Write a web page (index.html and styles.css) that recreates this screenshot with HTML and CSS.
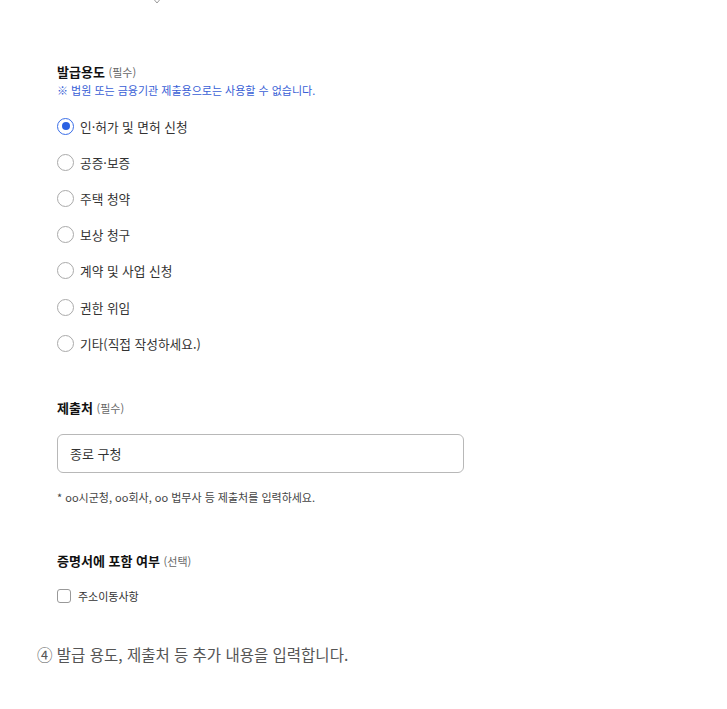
FILE: index.html
```html
<!DOCTYPE html>
<html lang="ko">
<head>
<meta charset="utf-8">
<link rel="stylesheet" href="styles.css">
</head>
<body>
<div class="page">
  <svg class="chev" width="14" height="8" viewBox="0 0 14 8"><polyline points="2,-3 7,3 12,-3" fill="none" stroke="#9a9a9a" stroke-width="1"/></svg>
  <div class="form">
    <div class="label">발급용도 <span class="sub">(필수)</span></div>
    <div class="note">※ 법원 또는 금융기관 제출용으로는 사용할 수 없습니다.</div>
    <div class="radios">
      <div class="radio-row"><span class="radio checked"></span><span>인·허가 및 면허 신청</span></div>
      <div class="radio-row"><span class="radio"></span><span>공증·보증</span></div>
      <div class="radio-row"><span class="radio"></span><span>주택 청약</span></div>
      <div class="radio-row"><span class="radio"></span><span>보상 청구</span></div>
      <div class="radio-row"><span class="radio"></span><span>계약 및 사업 신청</span></div>
      <div class="radio-row"><span class="radio"></span><span>권한 위임</span></div>
      <div class="radio-row"><span class="radio"></span><span>기타(직접 작성하세요.)</span></div>
    </div>
    <div class="label label-2">제출처 <span class="sub">(필수)</span></div>
    <div class="input">종로 구청</div>
    <div class="hint">* oo시군청, oo회사, oo 법무사 등 제출처를 입력하세요.</div>
    <div class="label label-3">증명서에 포함 여부 <span class="sub">(선택)</span></div>
    <div class="check-row"><span class="checkbox"></span><span>주소이동사항</span></div>
  </div>
  <p class="caption">④ 발급 용도, 제출처 등 추가 내용을 입력합니다.</p>
</div>
</body>
</html>
```
FILE: styles.css
```css
html, body {
  margin: 0;
  padding: 0;
  background: #fff;
}
body {
  font-family: "Noto Sans CJK KR", "Noto Sans", sans-serif;
  color: #222;
}
.page {
  position: relative;
  width: 727px;
  height: 709px;
  overflow: hidden;
}
.chev {
  position: absolute;
  left: 150px;
  top: 0;
}
.form {
  padding: 63px 0 0 57px;
}
.label {
  font-size: 13px;
  font-weight: 700;
  line-height: 18px;
  color: #111;
}
.sub {
  font-size: 11px;
  font-weight: 400;
  color: #666;
}
.note {
  font-size: 11px;
  line-height: 18px;
  color: #3a5fd6;
}
.radios {
  margin-top: 9px;
  display: flex;
  flex-direction: column;
}
.radio-row {
  height: 36.2px;
  display: flex;
  align-items: center;
  gap: 6px;
  font-size: 12.7px;
  color: #333;
}
.radio {
  width: 15px;
  height: 15px;
  border: 1px solid #aaa;
  border-radius: 50%;
  box-sizing: content-box;
  display: flex;
  align-items: center;
  justify-content: center;
}
.radio.checked {
  border-color: #3a6ee8;
}
.radio.checked::after {
  content: "";
  width: 8px;
  height: 8px;
  border-radius: 50%;
  background: #2b62e3;
}
.label-2 {
  margin-top: 38px;
}
.input {
  margin-top: 17px;
  width: 407px;
  height: 39px;
  box-sizing: border-box;
  border: 1px solid #b8b8b8;
  border-radius: 6px;
  padding-left: 12px;
  display: flex;
  align-items: center;
  font-size: 13px;
  color: #333;
}
.hint {
  margin-top: 15px;
  font-size: 11px;
  line-height: 18px;
  color: #444;
}
.label-3 {
  margin-top: 46px;
}
.check-row {
  margin-top: 17px;
  height: 18px;
  display: flex;
  align-items: center;
  gap: 7px;
  font-size: 11px;
  color: #333;
}
.checkbox {
  width: 12px;
  height: 12px;
  border: 1px solid #999;
  border-radius: 3px;
}
.caption {
  margin: 38px 0 0 37px;
  font-size: 15.5px;
  line-height: 22px;
  color: #555;
}
```
